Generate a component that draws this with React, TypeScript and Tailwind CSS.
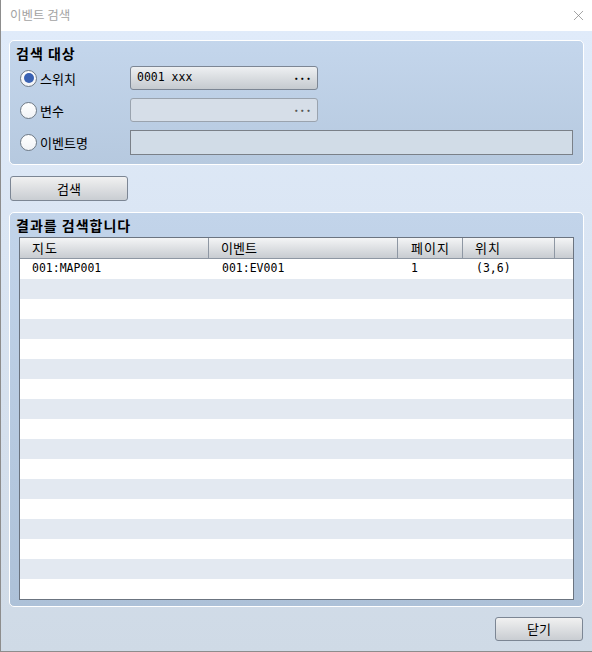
import { X } from "lucide-react";

const font = { fontFamily: '"Noto Sans CJK KR", "Noto Sans", sans-serif' };

function Radio({ checked, label }: { checked?: boolean; label: string }) {
  return (
    <div className="flex items-center gap-[3px]">
      <div className="flex h-[17px] w-[17px] items-center justify-center rounded-full border border-[#6f7a86] bg-gradient-to-b from-white to-[#f1f3f6]">
        {checked && <div className="h-[10px] w-[10px] rounded-full bg-[#3a62b3]" />}
      </div>
      <span className="text-[13px] leading-none text-black">{label}</span>
    </div>
  );
}

function Button({ label, className }: { label: string; className: string }) {
  return (
    <div
      className={`flex items-center justify-center rounded-[3px] border border-[#7c8694] bg-gradient-to-b from-[#f1f1f1] to-[#c9cdd2] text-[13px] text-black ${className}`}
    >
      {label}
    </div>
  );
}

export default function App() {
  const rows = Array.from({ length: 17 }, (_, i) => i);

  return (
    <div
      className="flex h-[652px] w-[592px] flex-col overflow-hidden border-b border-l border-[#8d8d8d] bg-white"
      style={font}
    >
      {/* title bar */}
      <div className="flex h-[31px] shrink-0 items-center justify-between bg-white pl-[9px] pr-[5px]">
        <span className="text-[12.5px] text-[#a3a3a3]">이벤트 검색</span>
        <X className="h-[17px] w-[17px] text-[#808080]" strokeWidth={1} />
      </div>

      {/* body */}
      <div className="flex flex-1 flex-col bg-gradient-to-b from-[#e0ebfa] to-[#cfdae6] px-[8px] pt-[9px]">
        {/* search target group */}
        <div className="h-[125px] rounded-[5px] border border-white bg-gradient-to-b from-[#c4d6ec] to-[#b6c9df] pl-[10px] pt-[2px]">
          <div className="-ml-[4px] text-[14px] font-bold leading-[20px] tracking-[1px] text-black">검색 대상</div>
          <div className="mt-[3px] flex flex-col gap-[8px]">
            <div className="flex items-center">
              <div className="w-[110px]">
                <Radio checked label="스위치" />
              </div>
              <div className="flex h-[24px] w-[188px] items-center justify-between rounded-[3px] border border-[#7c8694] bg-gradient-to-b from-[#eef0f2] to-[#c5cacf] px-[6px]">
                <span className="font-['DejaVu_Sans_Mono'] text-[11.5px] text-black">0001 xxx</span>
                <span className="text-[12px] font-bold leading-none tracking-[-1px] text-black">···</span>
              </div>
            </div>
            <div className="flex items-center">
              <div className="w-[110px]">
                <Radio label="변수" />
              </div>
              <div className="flex h-[24px] w-[188px] items-center justify-end rounded-[3px] border border-[#9aa3ae] bg-[#d6dee8] px-[6px]">
                <span className="text-[12px] font-bold leading-none tracking-[-1px] text-[#555]">···</span>
              </div>
            </div>
            <div className="flex items-center">
              <div className="w-[110px]">
                <Radio label="이벤트명" />
              </div>
              <div className="h-[25px] w-[443px] border border-[#7a8088] bg-[#d1dce7]" />
            </div>
          </div>
        </div>

        {/* search button */}
        <div className="mt-[11px] pl-[1px]">
          <Button label="검색" className="h-[25px] w-[118px]" />
        </div>

        {/* result group */}
        <div className="mt-[11px] h-[395px] rounded-[5px] border border-white bg-gradient-to-b from-[#c2d4ea] to-[#adc1d8] px-[9px] pt-[2px]">
          <div className="-ml-[3px] text-[14px] font-bold leading-[20px] tracking-[1px] text-black">결과를 검색합니다</div>
          <div className="mt-[2px] h-[363px] overflow-hidden border border-[#6b7480] bg-white">
            <div className="flex h-[21px] border-b border-[#8e97a3] bg-gradient-to-b from-[#f4f5f6] to-[#c8ccd1] text-[13px] leading-[20px] text-black">
              <div className="w-[189px] border-r border-[#8e97a3] pl-[12px] tracking-[1px]">지도</div>
              <div className="w-[189px] border-r border-[#8e97a3] pl-[12px]">이벤트</div>
              <div className="w-[65px] border-r border-[#8e97a3] pl-[13px] tracking-[1px]">페이지</div>
              <div className="w-[92px] border-r border-[#8e97a3] pl-[12px] tracking-[1px]">위치</div>
              <div className="flex-1" />
            </div>
            {rows.map((i) => (
              <div
                key={i}
                className={`flex h-[20px] items-center font-['DejaVu_Sans_Mono'] text-[11.5px] text-black ${
                  i % 2 === 0 ? "bg-white" : "bg-[#e3e9f1]"
                }`}
              >
                {i === 0 && (
                  <>
                    <div className="w-[189px] pl-[12px]">001:MAP001</div>
                    <div className="w-[189px] pl-[13px]">001:EV001</div>
                    <div className="w-[65px] pl-[13px]">1</div>
                    <div className="w-[92px] pl-[13px]">(3,6)</div>
                  </>
                )}
              </div>
            ))}
          </div>
        </div>

        {/* bottom */}
        <div className="flex justify-end pr-[1px] pt-[10px]">
          <Button label="닫기" className="h-[24px] w-[88px]" />
        </div>
      </div>
    </div>
  );
}
